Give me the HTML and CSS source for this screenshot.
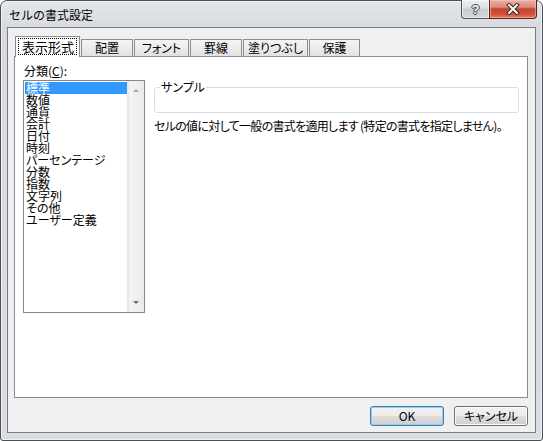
FILE: index.html
```html
<!DOCTYPE html>
<html lang="ja">
<head>
<meta charset="utf-8">
<title>セルの書式設定</title>
<link rel="stylesheet" href="styles.css">
</head>
<body>
<div class="window">
  <div class="titlebar">
    <span class="title">セルの書式設定</span>
    <div class="caption-btns">
      <div class="cbtn help"><span class="qmark">?</span></div>
      <div class="cbtn close">
        <svg width="14" height="12" viewBox="0 0 14 12">
          <path d="M3 2 L11 10 M11 2 L3 10" stroke="#3a2220" stroke-width="4" stroke-linecap="square" fill="none"/>
          <path d="M3 2 L11 10 M11 2 L3 10" stroke="#ffffff" stroke-width="2" stroke-linecap="square" fill="none"/>
        </svg>
      </div>
    </div>
  </div>
  <div class="client">
    <div class="tabs">
      <div class="tab active"><span class="focus">表示形式</span></div>
      <div class="tab t-haichi">配置</div>
      <div class="tab t-font">フォント</div>
      <div class="tab t-keisen">罫線</div>
      <div class="tab t-nuri">塗りつぶし</div>
      <div class="tab t-hogo">保護</div>
    </div>
    <div class="panel">
      <div class="col-left">
        <div class="label">分類(<u>C</u>):</div>
        <div class="listbox">
          <ul class="items">
            <li class="sel">標準</li>
            <li>数値</li>
            <li>通貨</li>
            <li>会計</li>
            <li>日付</li>
            <li>時刻</li>
            <li>パーセンテージ</li>
            <li>分数</li>
            <li>指数</li>
            <li>文字列</li>
            <li>その他</li>
            <li>ユーザー定義</li>
          </ul>
          <div class="vscroll">
            <div class="arrow up"></div>
            <div class="arrow down"></div>
          </div>
        </div>
      </div>
      <div class="col-right">
        <fieldset class="sample">
          <legend>サンプル</legend>
          <div class="sample-body"></div>
        </fieldset>
        <p class="desc">セルの値に対して一般の書式を適用します (特定の書式を指定しません)。</p>
      </div>
    </div>
    <div class="buttons">
      <button class="btn default">OK</button>
      <button class="btn">キャンセル</button>
    </div>
  </div>
</div>
</body>
</html>
```

FILE: styles.css
```css
* { box-sizing: border-box; }
html, body { margin: 0; padding: 0; }
body {
  width: 543px;
  height: 441px;
  overflow: hidden;
  background: #ffffff;
  font-family: "Noto Sans CJK JP", "Noto Sans", sans-serif;
  font-size: 12px;
  color: #000;
}

.window {
  width: 543px;
  height: 441px;
  border: 1px solid #4a4f55;
  border-radius: 7px 7px 3px 3px;
  background: linear-gradient(#e3e6ea, #d7dbe0 26px, #dadde1);
  box-shadow: inset 0 0 0 1px rgba(255,255,255,0.6);
  padding: 0 6px 7px 6px;
  display: flex;
  flex-direction: column;
}

.titlebar {
  height: 26px;
  display: flex;
  align-items: flex-start;
  padding-left: 2px;
}
.title {
  padding-top: 7px;
  font-size: 12px;
  line-height: 14px;
  color: #000;
}
.caption-btns {
  margin-left: auto;
  margin-right: -1px;
  display: flex;
  margin-top: -1px;
}
.cbtn {
  height: 19px;
  display: flex;
  align-items: center;
  justify-content: center;
  border: 1px solid #4e5358;
  border-top: none;
}
.help {
  width: 28px;
  border-radius: 0 0 0 4px;
  border-right: none;
  background: linear-gradient(#eef0f2, #dcdfe2 45%, #c8ccd0 50%, #d3d6da);
  box-shadow: inset 0 0 0 1px rgba(255,255,255,0.55);
}
.qmark {
  font-family: "Liberation Sans", sans-serif;
  font-weight: bold;
  font-size: 13px;
  line-height: 13px;
  color: #fff;
  text-shadow: 0 0 1px #333, 1px 0 0 #444, -1px 0 0 #444, 0 1px 0 #444, 0 -1px 0 #444;
}
.close {
  width: 48px;
  border-radius: 0 0 4px 0;
  border-color: #5e2118;
  background: linear-gradient(#eab2a6, #d98a7b 40%, #c8412c 50%, #d0563f 80%, #e07a5f);
  box-shadow: inset 0 0 0 1px rgba(255,210,200,0.5);
}

.client {
  flex: 1;
  background: #f0f0f0;
  border: 1px solid #7a7d82;
  padding: 8px 7px 6px 6px;
  display: flex;
  flex-direction: column;
}

.tabs {
  height: 20px;
  display: flex;
  align-items: flex-end;
}
.tab {
  height: 17px;
  margin-left: 1px;
  border: 1px solid #898c95;
  border-bottom: none;
  background: linear-gradient(#f5f5f5, #ebebeb 55%, #e1e1e1);
  display: flex;
  align-items: center;
  justify-content: center;
  line-height: 12px;
  font-feature-settings: "palt";
  white-space: nowrap;
}
.tab.active {
  width: 65px;
  height: 21px;
  margin-bottom: -1px;
  background: #fff;
  position: relative;
  z-index: 2;
  padding-bottom: 1px;
}
.focus {
  outline: 1px dotted #000;
  padding: 1px 2px 1px 3px;
  line-height: 13px;
  font-size: 13px;
  font-feature-settings: normal;
}
.t-haichi { width: 52px; }
.t-font { width: 55px; }
.t-keisen { width: 52px; }
.t-nuri { width: 65px; }
.t-hogo { width: 51px; }

.panel {
  height: 342px;
  background: #fff;
  border: 1px solid #898c95;
  padding: 8px 0 0 8px;
  display: flex;
  align-items: flex-start;
  gap: 9px;
}

.col-left { width: 122px; }
.label {
  height: 12px;
  line-height: 12px;
  margin: 0 0 3px 1px;
  font-feature-settings: "palt";
}
.listbox {
  width: 122px;
  height: 233px;
  border: 1px solid #828790;
  display: flex;
  background: #fff;
}
.items {
  flex: 1;
  list-style: none;
  margin: 0;
  padding: 1px 0 0 1px;
}
.items li {
  height: 12px;
  line-height: 12px;
  padding-left: 1px;
  white-space: nowrap;
  font-feature-settings: "palt";
}
.items li.sel {
  background: #3399ff;
  color: #fff;
}
.vscroll {
  width: 17px;
  background: linear-gradient(to right, #e6e6e6 0, #f4f4f4 2px, #f0f0f0 9px, #e9e9e9 100%);
  border-left: 1px solid #e9e9e9;
  display: flex;
  flex-direction: column;
  justify-content: space-between;
  align-items: center;
  padding: 8px 0 8px 0;
}
.arrow {
  width: 0;
  height: 0;
  border-left: 3px solid transparent;
  border-right: 3px solid transparent;
}
.arrow.up { border-bottom: 3px solid #a7a7a7; }
.arrow.down { border-top: 3px solid #6a6a6a; }

.col-right {
  width: 365px;
  padding-top: 16px;
}
.sample {
  margin: 0;
  padding: 0 0 0 5px;
  border: 1px solid #d5dfe5;
  border-radius: 3px;
}
.sample legend {
  padding: 0 1px;
  line-height: 12px;
  font-size: 12px;
  font-feature-settings: "palt";
}
.sample-body { height: 19px; }
.desc {
  margin: 7px 0 0 0;
  line-height: 12px;
  white-space: nowrap;
  letter-spacing: -0.7px;
  font-feature-settings: "palt";
}

.buttons {
  margin-top: 8px;
  display: flex;
  justify-content: flex-end;
  gap: 10px;
}
.btn {
  width: 74px;
  height: 20px;
  padding: 0;
  margin: 0;
  border: 1px solid #707070;
  border-radius: 3px;
  background: linear-gradient(#f2f2f2 0, #ebebeb 50%, #dddddd 50%, #cfcfcf 100%);
  box-shadow: inset 0 0 0 1px #fbfbfb;
  font-family: "Noto Sans CJK JP", "Noto Sans", sans-serif;
  font-size: 12px;
  line-height: 12px;
  color: #000;
  font-feature-settings: "palt";
}
.btn.default {
  border-color: #3c7fb1;
  box-shadow: inset 0 0 0 1px #8fd0ef;
}
```
